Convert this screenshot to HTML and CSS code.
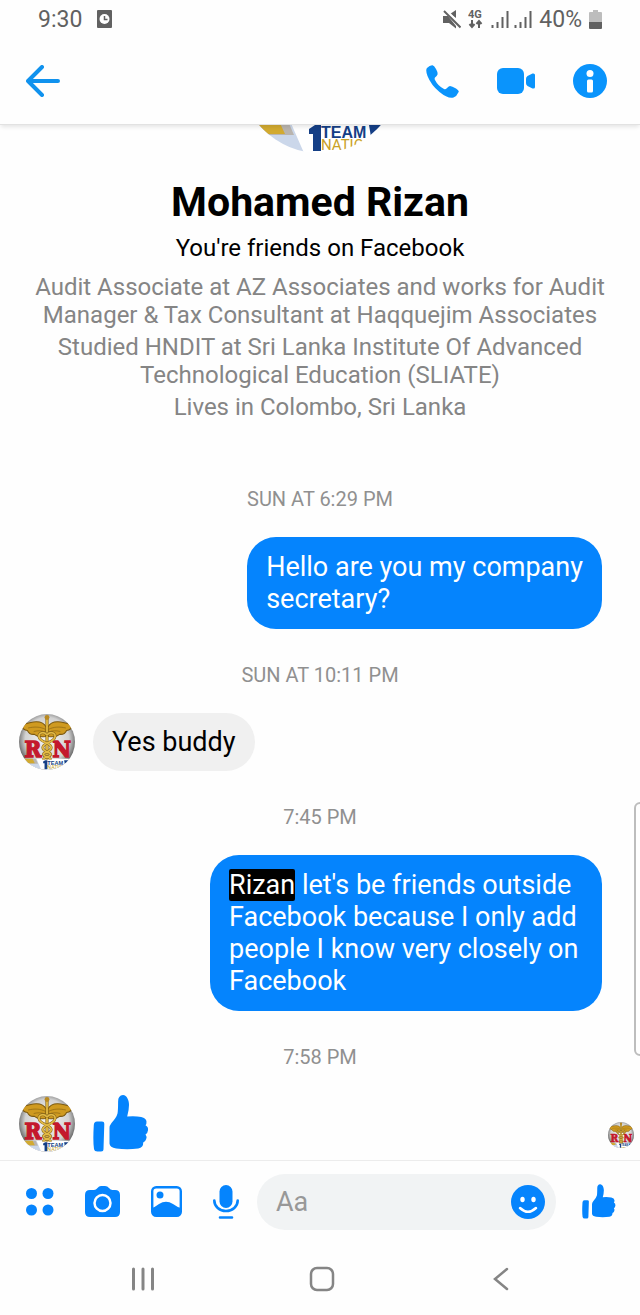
FILE: index.html
```html
<!DOCTYPE html>
<html lang="en">
<head>
  <meta charset="UTF-8">
  <meta name="viewport" content="width=device-width, initial-scale=1.0">
  <title>Mohamed Rizan</title>
  <link rel="stylesheet" href="styles.css">
</head>
<body>
  <!-- shared drawings -->
  <svg class="defs" width="0" height="0" aria-hidden="true">
    <defs>
      <radialGradient id="ball" cx="50%" cy="45%" r="52%">
        <stop offset="0" stop-color="#f8f8f6"/>
        <stop offset="0.75" stop-color="#d2d2d2"/>
        <stop offset="1" stop-color="#6d6d6d"/>
      </radialGradient>
      <clipPath id="round"><circle cx="80" cy="80" r="80"/></clipPath>
      <g id="team-logo">
        <path d="M0 128h160v32H0z" fill="#fff"/>
        <path d="M10 128h40l14 32H40z" fill="#cbd7ea"/>
        <path d="M10 128h38l6 14H20z" fill="#b9b4ae"/>
        <path d="M10 128h29l6 13H10z" fill="#d2aa30"/>
        <path d="M69 136l6-4h6v26h-8v-17h-4z" fill="#153f86"/>
        <text x="81" y="145" font-size="16" font-weight="bold" class="logo-team">TEAM</text>
        <text x="81" y="157" font-size="15" class="logo-nation">NATION</text>
        <path d="M129 132h14l-12 12z" fill="#153f86"/>
      </g>
    </defs>
    <symbol id="avatar" viewBox="0 0 160 160">
      <g clip-path="url(#round)">
        <rect width="160" height="160" fill="url(#ball)"/>
        <path d="M78 38C66 14 36 22 6 32c4 10 10 14 18 15 4 9 12 12 20 11 8 7 20 8 32 6zM82 38c12-24 42-16 72-6-4 10-10 14-18 15-4 9-12 12-20 11-8 7-20 8-32 6z" fill="#cf9a20" stroke="#7d5a10" stroke-width="3"/>
        <path d="M26 40c18-4 34-4 50 4M134 40c-18-4-34-4-50 4M42 50c12-3 22-3 34 2M118 50c-12-3-22-3-34 2" fill="none" stroke="#8d6714" stroke-width="2"/>
        <use href="#team-logo"/>
        <text x="16" y="124" font-size="64" font-weight="bold" class="serif-letter">R</text>
        <text x="96" y="124" font-size="64" font-weight="bold" class="serif-letter">N</text>
        <path d="M80 12v118" stroke="#8a6412" stroke-width="9"/>
        <path d="M80 12v118" stroke="#e5bd45" stroke-width="5"/>
        <path d="M80 60c-10-14-28-4-22 8 6 14 34 14 34 28s-24 12-22 20 20 6 20 14M80 60c10-14 28-4 22 8-6 14-34 14-34 28s24 12 22 20-20 6-20 14" fill="none" stroke="#80601a" stroke-width="8"/>
        <path d="M80 60c-10-14-28-4-22 8 6 14 34 14 34 28s-24 12-22 20 20 6 20 14M80 60c10-14 28-4 22 8-6 14-34 14-34 28s24 12 22 20-20 6-20 14" fill="none" stroke="#e2ba45" stroke-width="5"/>
        <circle cx="80" cy="10" r="7" fill="#b98a22"/>
      </g>
    </symbol>
    <symbol id="thumb" viewBox="0 0 56 57">
      <path d="M4 26.500h5q2.500 0 2.300 2.500l-.8 25q0 2.500-2.500 2.500H4.500Q1.500 56.500 1 54-.2 46 .8 30 1 26.500 4 26.500z"/>
      <path d="M16.500 33q0-2.500 2-5 5-5.500 6-9.500 .6-3 .6-12Q25 .5 30 0c4 .3 6 5.500 6 10q0 5-1.800 11.500 8-.7 14 .5 5 1 5.300 4.500 .2 2.500-1 3.800 3 1.500 2.500 5-.3 3-2.500 4.200 1.600 2 .7 4.500-.7 2.500-3 3.500 .3 5-5 6-11 1.500-22 0-6.500-1-6.700-5z"/>
    </symbol>
  </svg>

  <div class="screen">
    <div class="status-bar">
      <span>9:30</span>
      <svg class="status-app" width="15" height="18" viewBox="0 0 15 18">
        <rect width="15" height="18" rx="1" fill="#616161"/>
        <circle cx="7.500" cy="9" r="5" fill="#fff"/>
        <path d="M7.500 6v3.500h3" fill="none" stroke="#616161" stroke-width="1.500"/>
      </svg>
      <div class="status-right">
        <svg width="18" height="19" viewBox="0 0 18 19" fill="#616161">
          <path d="M0 6h5l8 10v2.500L6 13H0zM7 4l6-4v8z"/>
          <path d="M3 0l15 15" stroke="#fff" stroke-width="2"/>
          <path d="M1 1l16.500 16.500" stroke="#616161" stroke-width="2"/>
        </svg>
        <svg width="16" height="20" viewBox="0 0 16 20" fill="#616161">
          <text x="0" y="9" font-size="11" font-weight="bold" class="net">4G</text>
          <path d="M4 11v7M1.500 15L4 18l2.500-3M11 19v-7M8.500 15l2.500-3 2.500 3" fill="none" stroke="#616161" stroke-width="2"/>
        </svg>
        <svg width="41" height="18" viewBox="0 0 41 18">
          <path d="M1.500 15v3M6.500 12v6M11.500 7v11M16.500 1v17M24.500 15v3M29.500 12v6M34.500 7v11M39.500 1v17" stroke="#616161" stroke-width="2"/>
        </svg>
        <span>40%</span>
        <svg width="13" height="19" viewBox="0 0 13 19">
          <path d="M4 0h5v2h3q1 0 1 1v9H0V3q0-1 1-1h3z" fill="#bdbdbd"/>
          <path d="M0 12h13v6q0 1-1 1H1q-1 0-1-1z" fill="#616161"/>
        </svg>
      </div>
    </div>

    <header class="chat-header">
      <button class="icon-btn" aria-label="Back">
        <svg width="34" height="32" viewBox="0 0 34 32"><path d="M16 2L2 16l14 14M2 16h30" fill="none" stroke="#1092ee" stroke-width="4" stroke-linecap="round" stroke-linejoin="round"/></svg>
      </button>
      <div class="header-actions">
        <button class="icon-btn" aria-label="Call">
          <svg width="33" height="33" viewBox="0 0 33 33"><path d="M1 3Q4 0 6.500 .3 8 .5 10 4t1.500 5.500Q11 11 9 12.500q-.7 1 0 2.500 3 6 9 9 1.500 .7 2.500-.5 2-2.500 3.500-2.500 2 0 6 2.500t2.300 4Q31 31 27.500 32.500 22 34 13.500 27T1.500 11Q-.7 5 1 3z" fill="#0a94fc"/></svg>
        </button>
        <button class="icon-btn" aria-label="Video call">
          <svg width="38" height="26" viewBox="0 0 38 26" fill="#0a94fc"><rect width="27" height="26" rx="6"/><path d="M29 11q0-2 1.500-3l5-2.500Q38 5 38 7v12q0 2-2.500 1.500l-5-2.500Q29 17 29 15z"/></svg>
        </button>
        <button class="icon-btn" aria-label="Info">
          <svg width="34" height="34" viewBox="0 0 34 34"><circle cx="17" cy="17" r="17" fill="#0a94fc"/><circle cx="17" cy="9.500" r="3.500" fill="#fff"/><path d="M15.500 15.500h3q1.500 0 1.500 1.500v10q0 1.500-1.500 1.500h-3Q14 28.500 14 27V17q0-1.500 1.500-1.500z" fill="#fff"/></svg>
        </button>
      </div>
    </header>

    <main class="thread">
      <section class="profile">
        <svg class="profile-photo" width="160" height="28" viewBox="0 132 160 28"><g clip-path="url(#round)"><use href="#team-logo"/></g></svg>
        <h1>Mohamed Rizan</h1>
        <p class="friends">You're friends on Facebook</p>
        <p>Audit Associate at AZ Associates and works for Audit Manager &amp; Tax Consultant at Haqquejim Associates</p>
        <p>Studied HNDIT at Sri Lanka Institute Of Advanced Technological Education (SLIATE)</p>
        <p>Lives in Colombo, Sri Lanka</p>
      </section>

      <div class="time">SUN AT 6:29 PM</div>
      <div class="row sent">
        <div class="bubble">Hello are you my company<br>secretary?</div>
      </div>

      <div class="time">SUN AT 10:11 PM</div>
      <div class="row">
        <svg class="avatar" width="56" height="56"><use href="#avatar"/></svg>
        <div class="bubble">Yes buddy</div>
      </div>

      <div class="time">7:45 PM</div>
      <div class="row sent">
        <div class="bubble"><mark>Rizan</mark> let's be friends outside Facebook because I only add people I know very closely on Facebook</div>
      </div>

      <div class="time">7:58 PM</div>
      <div class="row last">
        <svg class="avatar" width="56" height="56"><use href="#avatar"/></svg>
        <svg class="thumb" width="56" height="57"><use href="#thumb"/></svg>
        <svg class="seen" width="26" height="26"><use href="#avatar"/></svg>
      </div>
      <div class="edge-handle"></div>
    </main>

    <footer class="composer">
      <div class="tools">
        <button class="icon-btn" aria-label="More">
          <svg width="28" height="28" viewBox="0 0 28 28" fill="#0584fd"><circle cx="5.500" cy="5.500" r="5.500"/><circle cx="22" cy="5.500" r="5.500"/><circle cx="5.500" cy="22" r="5.500"/><circle cx="22" cy="22" r="5.500"/></svg>
        </button>
        <button class="icon-btn" aria-label="Camera">
          <svg width="35" height="31" viewBox="0 0 35 31"><path d="M5 4h4q2 0 3.500-2T16 0h4q2.500 0 4 2t3.500 2H30q5 0 5 5v17q0 5-5 5H5q-5 0-5-5V9q0-5 5-5z" fill="#0584fd"/><circle cx="17.500" cy="17" r="8" fill="none" stroke="#fff" stroke-width="2.500"/></svg>
        </button>
        <button class="icon-btn" aria-label="Gallery">
          <svg width="31" height="31" viewBox="0 0 31 31"><rect x="1.200" y="1.200" width="28.600" height="28.600" rx="4" fill="#fff" stroke="#0584fd" stroke-width="2.400"/><circle cx="9" cy="9" r="3.500" fill="#0584fd"/><path d="M1 22q3-1 7-4 7-4.500 14 0 4 3 8 4v4q0 4-4 4H5q-4 0-4-4z" fill="#0584fd"/></svg>
        </button>
        <button class="icon-btn" aria-label="Voice">
          <svg width="26" height="34" viewBox="0 0 26 34"><rect x="6.500" width="13" height="23" rx="6.500" fill="#0584fd"/><path d="M1.300 15.500a11.700 10.500 0 0 0 23.400 0M7 32.500h12" fill="none" stroke="#0584fd" stroke-width="2.600" stroke-linecap="round"/></svg>
        </button>
      </div>
      <div class="text-box">
        <input type="text" placeholder="Aa" aria-label="Message">
        <button class="icon-btn" aria-label="Emoji">
          <svg width="34" height="34" viewBox="0 0 34 34"><circle cx="17" cy="17" r="17" fill="#0584fd"/><ellipse cx="11.500" cy="14.500" rx="2.200" ry="2.800" fill="#fff"/><ellipse cx="22.500" cy="14.500" rx="2.200" ry="2.800" fill="#fff"/><path d="M9 23q8 7.500 16 0" fill="none" stroke="#fff" stroke-width="2.500" stroke-linecap="round"/></svg>
        </button>
      </div>
      <button class="icon-btn" aria-label="Like">
        <svg class="thumb" width="34" height="35"><use href="#thumb"/></svg>
      </button>
    </footer>

    <nav class="system-nav">
      <button class="icon-btn" aria-label="Recent apps">
        <svg width="24" height="24" viewBox="0 0 24 24"><path d="M2.500 2v20M12 2v20M21.500 2v20" stroke="#858585" stroke-width="3" stroke-linecap="round"/></svg>
      </button>
      <button class="icon-btn" aria-label="Home">
        <svg width="26" height="26" viewBox="0 0 26 26"><rect x="2" y="2" width="22" height="22" rx="6" fill="none" stroke="#858585" stroke-width="2.500"/></svg>
      </button>
      <button class="icon-btn" aria-label="Back">
        <svg width="24" height="24" viewBox="0 0 24 24"><path d="M18 2L6 12l12 10" fill="none" stroke="#858585" stroke-width="2.500" stroke-linecap="round"/></svg>
      </button>
    </nav>
  </div>
</body>
</html>
```

FILE: styles.css
```css
* {
  box-sizing: border-box;
}

body {
  margin: 0;
  background-color: #fefefe;
  font-family: Roboto, "Liberation Sans", sans-serif;
  color: #000;
}

svg {
  display: block;
  flex-shrink: 0;
}

.defs {
  position: absolute;
}

.screen {
  display: flex;
  flex-direction: column;
  min-height: 100vh;
}

.icon-btn {
  padding: 0;
  border: none;
  background: none;
  cursor: pointer;
}

/* phone status bar */
.status-bar {
  display: flex;
  align-items: center;
  height: 38px;
  padding: 0 38px;
  font-size: 23px;
  color: #616161;
}

.status-app {
  margin-left: 15px;
}

.status-right {
  display: flex;
  align-items: center;
  gap: 7px;
  margin-left: auto;
}

/* header */
.chat-header {
  display: flex;
  justify-content: space-between;
  align-items: center;
  height: 87px;
  padding: 0 33px 0 26px;
  border-bottom: 1px solid #e2e2e2;
  box-shadow: 0 3px 4px -1px rgba(0, 0, 0, 0.1);
  position: relative;
  z-index: 1;
}

.header-actions {
  display: flex;
  align-items: center;
  gap: 38px;
}

/* conversation */
.thread {
  flex: 1;
  position: relative;
}

.profile {
  padding: 0 32px 28px;
  text-align: center;
  font-size: 24px;
  line-height: 28px;
  color: #858585;
}

.profile-photo {
  margin: 0 auto;
}

.profile h1 {
  margin: 25px 0 8px;
  font-size: 41px;
  line-height: 48px;
  color: #000;
}

.profile p {
  margin: 0 0 4px;
}

.profile .friends {
  margin-bottom: 11px;
  color: #000;
}

.time {
  margin: 32px 0 24px;
  font-size: 20px;
  line-height: 28px;
  text-align: center;
  color: #909090;
}

.row {
  display: flex;
  align-items: center;
  gap: 18px;
  padding: 0 38px 0 19px;
}

.row.sent {
  justify-content: flex-end;
}

.row.last {
  padding: 0 6px 8px 19px;
}

.bubble {
  max-width: 392px;
  padding: 13px 19px;
  border-radius: 29px;
  background-color: #f0f0f0;
  font-size: 27px;
  line-height: 32px;
}

.sent .bubble {
  padding: 14px 19px;
  background-color: #0584fd;
  color: #fff;
}

.bubble mark {
  border-radius: 2px;
  background-color: #000;
  color: #fff;
}

.thumb {
  fill: #0584fd;
}

.seen {
  align-self: flex-end;
  margin-left: auto;
  margin-bottom: 4px;
}

.serif-letter {
  font-family: "DejaVu Serif Condensed", "DejaVu Serif", serif;
  fill: #c4182c;
  stroke: #c4182c;
  stroke-width: 4px;
}

.logo-team {
  font-family: "Liberation Sans", sans-serif;
  fill: #153f86;
}

.logo-nation {
  font-family: Roboto, sans-serif;
  fill: #c9a227;
}

.net {
  font-family: Roboto, sans-serif;
}

/* pull-out panel on the right edge */
.edge-handle {
  position: absolute;
  right: -6px;
  bottom: 104px;
  width: 12px;
  height: 254px;
  border: 2px solid #bdbdbd;
  border-radius: 6px;
  clip-path: inset(0 6px 0 0);
}

/* composer */
.composer {
  display: flex;
  align-items: center;
  height: 82px;
  padding: 0 24px 0 26px;
  border-top: 1px solid #ececec;
}

.tools {
  display: flex;
  align-items: center;
  gap: 31px;
}

.text-box {
  flex: 1;
  min-width: 0;
  display: flex;
  align-items: center;
  height: 56px;
  margin: 0 26px 0 18px;
  padding: 0 11px 0 19px;
  border-radius: 28px;
  background-color: #f1f3f4;
}

.text-box input {
  flex: 1;
  min-width: 0;
  padding: 0;
  border: none;
  outline: none;
  background: none;
  font-family: inherit;
  font-size: 27px;
}

.text-box input::placeholder {
  color: #989898;
}

/* android buttons */
.system-nav {
  display: flex;
  justify-content: space-around;
  align-items: center;
  height: 74px;
  padding: 0 50px 0 54px;
}
```
